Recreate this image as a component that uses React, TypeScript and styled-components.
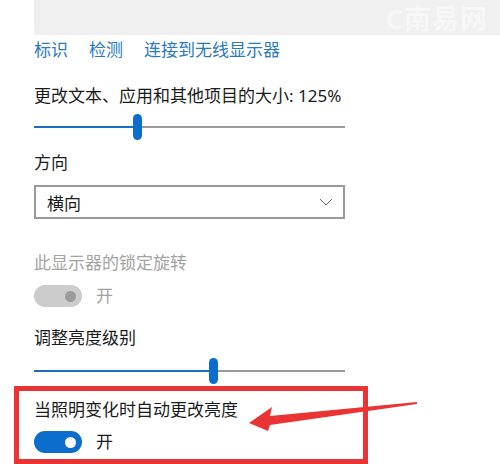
import styled, { createGlobalStyle } from 'styled-components'

const GlobalStyle = createGlobalStyle`
  html, body {
    margin: 0;
    padding: 0;
    background: #ffffff;
  }
  body {
    font-family: "Noto Sans", "Noto Sans CJK SC", sans-serif;
    color: #1b1b1b;
  }
`

const Page = styled.div`
  position: relative;
  width: 500px;
  height: 464px;
  overflow: hidden;
  padding-left: 34px;
  box-sizing: border-box;
`

const TopBar = styled.div`
  height: 35px;
  background: #f0f0f0;
  display: flex;
  justify-content: flex-end;
  align-items: center;
  padding-right: 12px;
`

const Watermark = styled.span`
  font-size: 27px;
  font-weight: 700;
  color: #f7f7f7;
  letter-spacing: 1px;
`

const LinkRow = styled.div`
  display: flex;
  gap: 21px;
  margin-top: 4px;
`

const Link = styled.a`
  font-size: 17px;
  line-height: 22px;
  color: #2a7ac0;
  text-decoration: none;
`

const Label = styled.div<{ $gap: number; $muted?: boolean }>`
  margin-top: ${(p) => p.$gap}px;
  font-size: 17px;
  line-height: 22px;
  color: ${(p) => (p.$muted ? '#a3a3a3' : '#1b1b1b')};
`

const Slider = styled.div<{ $gap: number }>`
  position: relative;
  width: 311px;
  height: 26px;
  margin-top: ${(p) => p.$gap}px;
`

const Track = styled.div<{ $value: number }>`
  position: absolute;
  left: 0;
  right: 0;
  top: 12px;
  height: 2px;
  background: linear-gradient(
    to right,
    #1a6fc4 ${(p) => p.$value}%,
    #9a9a9a ${(p) => p.$value}%
  );
`

const Thumb = styled.div<{ $value: number }>`
  position: absolute;
  top: 0;
  left: calc(${(p) => p.$value}% - 4.5px);
  width: 9px;
  height: 26px;
  border-radius: 4.5px;
  background: #0b6dcc;
`

const Select = styled.div`
  margin-top: 11px;
  width: 311px;
  height: 34px;
  box-sizing: border-box;
  border: 2px solid #999999;
  display: flex;
  align-items: center;
  justify-content: space-between;
  padding: 0 10px 0 11px;
  font-size: 17px;
`

const ToggleRow = styled.div<{ $gap: number }>`
  display: flex;
  align-items: center;
  gap: 14px;
  margin-top: ${(p) => p.$gap}px;
  height: 22px;
`

const Toggle = styled.div<{ $on?: boolean }>`
  width: 48px;
  height: 22px;
  border-radius: 11px;
  background: ${(p) => (p.$on ? '#0b6dcc' : '#cccccc')};
  display: flex;
  align-items: center;
  justify-content: flex-end;
  padding-right: 6px;
  box-sizing: border-box;
`

const Knob = styled.div<{ $on?: boolean }>`
  width: 11px;
  height: 11px;
  border-radius: 50%;
  background: ${(p) => (p.$on ? '#ffffff' : '#9b9b9b')};
`

const ToggleText = styled.span<{ $muted?: boolean }>`
  font-size: 17px;
  line-height: 22px;
  color: ${(p) => (p.$muted ? '#a3a3a3' : '#1b1b1b')};
`

const Highlight = styled.div`
  margin: 2px 0 0 -20px;
  width: 354px;
  height: 78px;
  box-sizing: border-box;
  border: 5px solid #ea3434;
  padding: 8px 0 0 15px;
`

const Arrow = styled.svg`
  position: absolute;
  left: 245px;
  top: 398px;
  width: 175px;
  height: 36px;
`

export default function App(): JSX.Element {
  return (
    <Page>
      <GlobalStyle />
      <TopBar>
        <Watermark>C南易网</Watermark>
      </TopBar>

      <LinkRow>
        <Link>标识</Link>
        <Link>检测</Link>
        <Link>连接到无线显示器</Link>
      </LinkRow>

      <Label $gap={24}>更改文本、应用和其他项目的大小: 125%</Label>
      <Slider $gap={7}>
        <Track $value={33.4} />
        <Thumb $value={33.4} />
      </Slider>

      <Label $gap={12}>方向</Label>
      <Select>
        <span>横向</span>
        <svg width="14" height="8" viewBox="0 0 14 8">
          <path d="M1 1 L7 7 L13 1" fill="none" stroke="#666" strokeWidth="1" />
        </svg>
      </Select>

      <Label $gap={33} $muted>
        此显示器的锁定旋转
      </Label>
      <ToggleRow $gap={11}>
        <Toggle>
          <Knob />
        </Toggle>
        <ToggleText $muted>开</ToggleText>
      </ToggleRow>

      <Label $gap={20}>调整亮度级别</Label>
      <Slider $gap={9}>
        <Track $value={57.6} />
        <Thumb $value={57.6} />
      </Slider>

      <Highlight>
        <Label $gap={0}>当照明变化时自动更改亮度</Label>
        <ToggleRow $gap={10}>
          <Toggle $on>
            <Knob $on />
          </Toggle>
          <ToggleText>开</ToggleText>
        </ToggleRow>
      </Highlight>

      <Arrow viewBox="245 398 175 36">
        <polygon
          points="249,423 272,407 270,416 417,402 417,404 270,425 268,431"
          fill="#ea3434"
        />
      </Arrow>
    </Page>
  )
}
